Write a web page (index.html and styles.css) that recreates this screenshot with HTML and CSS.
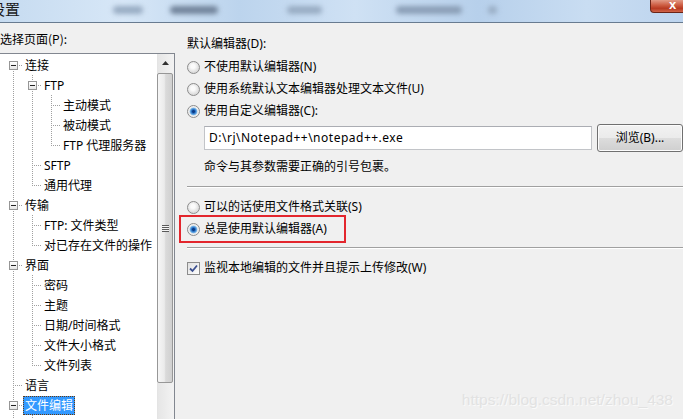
FILE: index.html
```html
<!DOCTYPE html>
<html>
<head>
<meta name="viewport" content="width=device-width, initial-scale=1">
<title>设置</title>
<link rel="stylesheet" href="styles.css">
</head>
<body>

<div class="titlebar">
  <span class="title">设置</span>
  <span class="blob b1"></span>
  <span class="blob b2"></span>
  <span class="blob b3"></span>
  <span class="blob b4"></span>
  <span class="blob b5"></span>
  <span class="close">x</span>
</div>

<div class="main">
  <div class="left">
    <div class="caption">选择页面(P):</div>
    <div class="treebox">
      <ul class="tree">
        <li class="first">
          <div class="row"><span class="twig"><i class="exp"></i></span><span class="lbl">连接</span></div>
          <ul>
            <li>
              <div class="row"><span class="twig"><i class="exp"></i></span><span class="lbl">FTP</span></div>
              <ul>
                <li><div class="row"><span class="twig"></span><span class="lbl">主动模式</span></div></li>
                <li><div class="row"><span class="twig"></span><span class="lbl">被动模式</span></div></li>
                <li class="last"><div class="row"><span class="twig"></span><span class="lbl">FTP 代理服务器</span></div></li>
              </ul>
            </li>
            <li><div class="row"><span class="twig"></span><span class="lbl">SFTP</span></div></li>
            <li class="last"><div class="row"><span class="twig"></span><span class="lbl">通用代理</span></div></li>
          </ul>
        </li>
        <li>
          <div class="row"><span class="twig"><i class="exp"></i></span><span class="lbl">传输</span></div>
          <ul>
            <li><div class="row"><span class="twig"></span><span class="lbl">FTP: 文件类型</span></div></li>
            <li class="last"><div class="row"><span class="twig"></span><span class="lbl">对已存在文件的操作</span></div></li>
          </ul>
        </li>
        <li>
          <div class="row"><span class="twig"><i class="exp"></i></span><span class="lbl">界面</span></div>
          <ul>
            <li><div class="row"><span class="twig"></span><span class="lbl">密码</span></div></li>
            <li><div class="row"><span class="twig"></span><span class="lbl">主题</span></div></li>
            <li><div class="row"><span class="twig"></span><span class="lbl">日期/时间格式</span></div></li>
            <li><div class="row"><span class="twig"></span><span class="lbl">文件大小格式</span></div></li>
            <li class="last"><div class="row"><span class="twig"></span><span class="lbl">文件列表</span></div></li>
          </ul>
        </li>
        <li><div class="row"><span class="twig"></span><span class="lbl">语言</span></div></li>
        <li>
          <div class="row"><span class="twig"><i class="exp"></i></span><span class="lbl sel">文件编辑</span></div>
          <ul>
            <li class="last"><div class="row"><span class="twig"></span></div></li>
          </ul>
        </li>
      </ul>
      <div class="vscroll">
        <div class="arrow"><svg width="7" height="4" viewBox="0 0 7 4"><path d="M3.5 0 L7 4 L0 4 Z" fill="#303030"/></svg></div>
        <div class="thumb"><span class="grip"></span></div>
      </div>
    </div>
  </div>

  <div class="right">
    <div class="heading">默认编辑器(D):</div>
    <div class="opt"><span class="radio"></span>不使用默认编辑器(N)</div>
    <div class="opt"><span class="radio"></span>使用系统默认文本编辑器处理文本文件(U)</div>
    <div class="opt"><span class="radio on"></span>使用自定义编辑器(C):</div>
    <div class="pathrow">
      <div class="textbox">D:\rj\Notepad++\notepad++.exe</div>
      <div class="button">浏览(B)...</div>
    </div>
    <div class="note">命令与其参数需要正确的引号包裹。</div>
    <div class="sep"></div>
    <div class="opt opt-s"><span class="radio"></span>可以的话使用文件格式关联(S)</div>
    <div class="mark">
      <div class="opt"><span class="radio on"></span>总是使用默认编辑器(A)</div>
    </div>
    <div class="sep sep2"></div>
    <div class="opt opt-w"><span class="check"><svg width="9" height="9" viewBox="0 0 9 9"><path d="M1 4.5 L3.5 7 L8 1.5" fill="none" stroke="#3b4f8f" stroke-width="1.8"/></svg></span>监视本地编辑的文件并且提示上传修改(W)</div>
  </div>
</div>

<div class="watermark">https://blog.csdn.net/zhou_438</div>

</body>
</html>
```

FILE: styles.css
```css
* {box-sizing: border-box;}

body {
  margin: 0;
  height: 419px;
  overflow: hidden;
  background: #f0f0f0;
  font-family: "Noto Sans", "Noto Sans CJK SC", sans-serif;
  font-size: 12px;
  line-height: 16px;
  color: #000;
  position: relative;
}

/* window caption, blurred in the original */
.titlebar {
  height: 23px;
  display: flex;
  align-items: center;
  overflow: hidden;
  border-bottom: 1px solid #687b90;
  background: linear-gradient(to right, #c6dbf0, #d7e7f7 18%, #bcd4ed 35%, #cfe1f4 52%, #b7d0eb 70%, #c9ddf2 86%, #bdd4ee);
}

.title {
  margin-left: -10px;
  font-size: 15px;
  line-height: 18px;
  font-family: "Noto Sans CJK SC", sans-serif;
  color: #1a1a1a;
  margin-top: -4px;
}

.blob {
  height: 8px;
  margin-top: -3px;
  border-radius: 4px;
  background: #98acc3;
  filter: blur(2.5px);
}
.b1 {width: 30px; margin-left: 93px;}
.b2 {width: 48px; margin-left: 27px; background: #71839a;}
.b3 {width: 35px; margin-left: 69px;}
.b4 {width: 66px; margin-left: 74px; background: #8a9eb6;}
.b5 {width: 9px; margin-left: 26px;}

.close {
  margin-left: auto;
  margin-right: -11px;
  align-self: flex-start;
  width: 44px;
  height: 13px;
  padding-left: 18px;
  border: 1px solid #6b2417;
  border-top: none;
  border-radius: 0 0 4px 4px;
  background: linear-gradient(#e29a86, #cc5a40 45%, #b83a22 70%, #d0664a);
  color: #fff;
  font-family: "Liberation Sans", sans-serif;
  font-weight: bold;
  font-size: 13px;
  line-height: 9px;
}

.main {
  display: flex;
}

.left {
  width: 175px;
  flex: none;
  padding-top: 8px;
}

.caption {
  line-height: 15px;
  font-family: "Noto Sans CJK SC", sans-serif;
}

.treebox {
  margin: 7px 0 0 -1px;
  width: 176px;
  height: 372px;
  display: flex;
  border: 1px solid #828790;
  background: #fff;
  overflow: hidden;
}

/* tree with dotted connector lines */
.tree, .tree ul {
  margin: 0;
  padding: 0;
  list-style: none;
}
.tree {
  flex: 1;
  padding-top: 1px;
  overflow: hidden;
}
.tree ul {
  padding-left: 19px;
}
.tree li {
  background: repeating-linear-gradient(#a0a0a0 0 1px, transparent 1px 2px) 13px 0 / 1px 100% no-repeat;
}
.tree li.last {
  background-size: 1px 10px;
}
.tree > li.first {
  background-position: 13px 10px;
  background-size: 1px calc(100% - 10px);
}

.row {
  height: 20px;
  display: flex;
  align-items: center;
  white-space: nowrap;
  background: repeating-linear-gradient(to right, #a0a0a0 0 1px, transparent 1px 2px) 13px 10px / 10px 1px no-repeat;
}

.twig {
  width: 23px;
  height: 20px;
  flex: none;
}

.exp {
  display: block;
  width: 9px;
  height: 9px;
  margin: 6px 0 0 9px;
  border: 1px solid #969696;
  background: linear-gradient(#222, #222) center / 5px 1px no-repeat, linear-gradient(#fff, #e6e6e6);
}

.lbl {
  line-height: 17px;
  padding: 0 1px;
  border: 1px solid transparent;
}

.lbl.sel {
  background: #3399ff;
  color: #fff;
  border: 1px dotted #6b3a0c;
}

.vscroll {
  width: 17px;
  flex: none;
  border-left: 1px solid #e4e4e4;
  background: linear-gradient(to right, #e6e6e6, #f3f3f3);
}

.arrow {
  height: 17px;
  display: flex;
  align-items: center;
  justify-content: center;
  padding-right: 1px;
}

.thumb {
  width: 16px;
  height: 310px;
  margin: 2px 0 0 -1px;
  border: 1px solid #979797;
  border-radius: 2px;
  background: linear-gradient(to right, #f6f6f6, #ebebeb 45%, #dadada 55%, #d0d0d0);
  display: flex;
  align-items: center;
  justify-content: center;
}

.grip {
  width: 7px;
  height: 7px;
  background: repeating-linear-gradient(#5a5a5a 0 1px, #f4f4f4 1px 2px);
}

/* options panel */
.right {
  flex: 1;
  padding: 13px 0 0 12px;
  font-family: "Noto Sans", "Noto Sans CJK SC", sans-serif;
}

.heading {
  height: 16px;
  margin-bottom: 4px;
}

.opt {
  height: 22px;
  display: flex;
  align-items: center;
  white-space: nowrap;
}

.radio {
  width: 13px;
  height: 13px;
  margin-right: 4px;
  border-radius: 50%;
  border: 1px solid #8c8c8c;
  background: radial-gradient(circle at 45% 40%, #fbfbfb 0 2px, #dcdcdc 6px);
}

.radio.on {
  background: radial-gradient(circle at 50% 50%, #0a3a87 0 1px, #2a72c4 2px, #7dbbec 3.5px, #e9e9e9 4.2px, #f7f7f7 6px);
}

.check {
  width: 13px;
  height: 13px;
  margin-right: 4px;
  border: 1px solid #8c8c8c;
  background: linear-gradient(135deg, #e0e0e0, #fdfdfd);
  display: flex;
  align-items: center;
  justify-content: center;
}

.pathrow {
  display: flex;
  align-items: center;
  height: 28px;
  margin: 2px 0 0 17px;
}

.textbox {
  width: 388px;
  height: 24px;
  padding-left: 4px;
  border: 1px solid #c2c4c8;
  border-top-color: #abadb3;
  background: #fff;
  line-height: 22px;
  letter-spacing: 0.5px;
}

.button {
  width: 86px;
  height: 28px;
  margin-left: 5px;
  border: 1px solid #707070;
  border-radius: 3px;
  background: linear-gradient(#f2f2f2, #ebebeb 50%, #dddddd 50%, #cfcfcf);
  box-shadow: inset 0 0 0 1px #fcfcfc;
  text-align: center;
  line-height: 25px;
}

.note {
  margin: 7px 0 0 17px;
  height: 16px;
}

.sep {
  margin-top: 11px;
  height: 2px;
  border-top: 1px solid #a0a0a0;
  border-bottom: 1px solid #fff;
}

.opt-s {
  margin-top: 9px;
  height: 20px;
}

/* red annotation box from the screenshot */
.mark {
  width: 167px;
  height: 28px;
  margin: -2px 0 0 -8px;
  padding: 1px 0 0 6px;
  border: 2px solid #e3262d;
}

.sep2 {
  margin-top: 4px;
}

.opt-w {
  margin-top: 9px;
  height: 20px;
}

.watermark {
  position: absolute;
  right: 10px;
  bottom: 10px;
  font-family: "Liberation Sans", sans-serif;
  font-size: 15.5px;
  line-height: 18px;
  color: #e2e2e2;
  text-shadow: 1px 1px 0 #fafafa;
}
```
